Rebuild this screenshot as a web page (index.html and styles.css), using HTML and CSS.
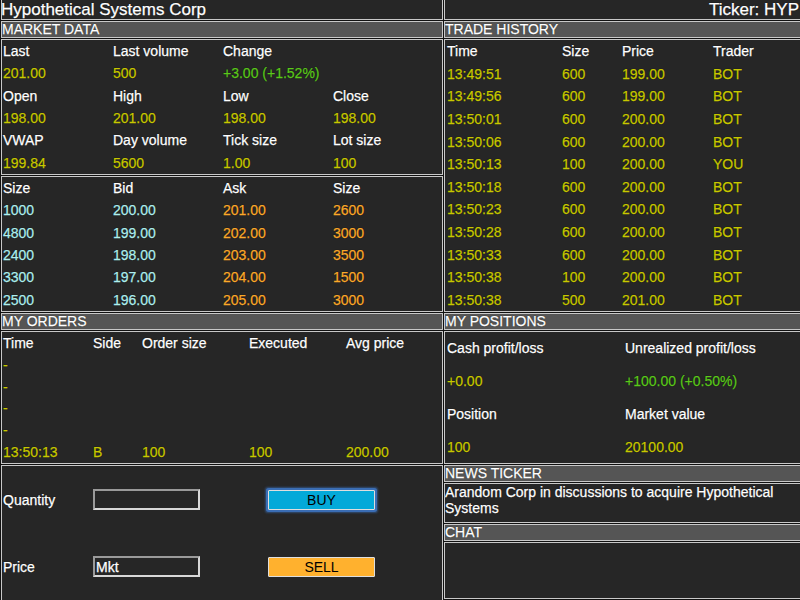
FILE: index.html
```html
<!DOCTYPE html>
<html>
<head>
<meta charset="utf-8">
<title>Hypothetical Systems Corp</title>
<link rel="stylesheet" href="styles.css">
</head>
<body>
<div class="app">
  <div class="col col-left">
    <div class="box title">Hypothetical Systems Corp</div>
    <div class="box head">MARKET DATA</div>
    <div class="box grid market">
      <span>Last</span><span>Last volume</span><span>Change</span><span></span>
      <span class="y">201.00</span><span class="y">500</span><span class="g">+3.00 (+1.52%)</span><span></span>
      <span>Open</span><span>High</span><span>Low</span><span>Close</span>
      <span class="y">198.00</span><span class="y">201.00</span><span class="y">198.00</span><span class="y">198.00</span>
      <span>VWAP</span><span>Day volume</span><span>Tick size</span><span>Lot size</span>
      <span class="y">199.84</span><span class="y">5600</span><span class="y">1.00</span><span class="y">100</span>
    </div>
    <div class="box grid book">
      <span>Size</span><span>Bid</span><span>Ask</span><span>Size</span>
      <span class="c">1000</span><span class="c">200.00</span><span class="o">201.00</span><span class="o">2600</span>
      <span class="c">4800</span><span class="c">199.00</span><span class="o">202.00</span><span class="o">3000</span>
      <span class="c">2400</span><span class="c">198.00</span><span class="o">203.00</span><span class="o">3500</span>
      <span class="c">3300</span><span class="c">197.00</span><span class="o">204.00</span><span class="o">1500</span>
      <span class="c">2500</span><span class="c">196.00</span><span class="o">205.00</span><span class="o">3000</span>
    </div>
    <div class="box head">MY ORDERS</div>
    <div class="box grid orders">
      <span>Time</span><span>Side</span><span>Order size</span><span>Executed</span><span>Avg price</span>
      <span class="y">-</span><span></span><span></span><span></span><span></span>
      <span class="y">-</span><span></span><span></span><span></span><span></span>
      <span class="y">-</span><span></span><span></span><span></span><span></span>
      <span class="y">-</span><span></span><span></span><span></span><span></span>
      <span class="y">13:50:13</span><span class="y">B</span><span class="y">100</span><span class="y">100</span><span class="y">200.00</span>
    </div>
    <div class="box entry">
      <span>Quantity</span>
      <input class="field" type="text" value="">
      <span></span>
      <button class="btn buy" type="button">BUY</button>
      <span>Price</span>
      <input class="field" type="text" value="Mkt">
      <span></span>
      <button class="btn sell" type="button">SELL</button>
    </div>
  </div>
  <div class="col col-right">
    <div class="box title ticker">Ticker: HYP</div>
    <div class="box head">TRADE HISTORY</div>
    <div class="box grid trades">
      <span>Time</span><span>Size</span><span>Price</span><span>Trader</span>
      <span class="y">13:49:51</span><span class="y">600</span><span class="y">199.00</span><span class="y">BOT</span>
      <span class="y">13:49:56</span><span class="y">600</span><span class="y">199.00</span><span class="y">BOT</span>
      <span class="y">13:50:01</span><span class="y">600</span><span class="y">200.00</span><span class="y">BOT</span>
      <span class="y">13:50:06</span><span class="y">600</span><span class="y">200.00</span><span class="y">BOT</span>
      <span class="y">13:50:13</span><span class="y">100</span><span class="y">200.00</span><span class="y">YOU</span>
      <span class="y">13:50:18</span><span class="y">600</span><span class="y">200.00</span><span class="y">BOT</span>
      <span class="y">13:50:23</span><span class="y">600</span><span class="y">200.00</span><span class="y">BOT</span>
      <span class="y">13:50:28</span><span class="y">600</span><span class="y">200.00</span><span class="y">BOT</span>
      <span class="y">13:50:33</span><span class="y">600</span><span class="y">200.00</span><span class="y">BOT</span>
      <span class="y">13:50:38</span><span class="y">100</span><span class="y">200.00</span><span class="y">BOT</span>
      <span class="y">13:50:38</span><span class="y">500</span><span class="y">201.00</span><span class="y">BOT</span>
    </div>
    <div class="box head">MY POSITIONS</div>
    <div class="box grid positions">
      <span>Cash profit/loss</span><span>Unrealized profit/loss</span>
      <span class="y">+0.00</span><span class="g">+100.00 (+0.50%)</span>
      <span>Position</span><span>Market value</span>
      <span class="y">100</span><span class="y">20100.00</span>
    </div>
    <div class="box head">NEWS TICKER</div>
    <div class="box news">Arandom Corp in discussions to acquire Hypothetical Systems</div>
    <div class="box head">CHAT</div>
    <div class="box chat"></div>
  </div>
</div>
</body>
</html>
```
FILE: styles.css
```css
html, body {
  margin: 0;
  padding: 0;
  background: #111111;
  overflow: hidden;
}

body {
  font-family: "Liberation Sans", Arial, Helvetica, sans-serif;
  font-size: 14px;
  color: #ffffff;
  -webkit-text-stroke: 0.25px currentColor;
  text-shadow: 0 0 1px rgba(0, 0, 0, 0.9);
}

.app {
  display: flex;
  gap: 1px;
  width: 801px;
  height: 600px;
  overflow: hidden;
}

.col {
  display: flex;
  flex-direction: column;
  gap: 1px;
  flex: none;
}

.col-left {
  width: 442px;
  margin-left: 1px;
}

.col-right {
  width: 357px;
}

.box {
  box-sizing: border-box;
  flex: none;
  border: 1px solid #c8c8c8;
  background: #262626;
}

.title {
  height: 20px;
  border-top: 0;
  font-size: 17px;
  line-height: 19px;
  white-space: nowrap;
  overflow: hidden;
  text-indent: -1px;
}

.ticker {
  text-align: right;
  padding-right: 1px;
}

.head {
  height: 17px;
  background: #555555;
  font-size: 14px;
  line-height: 15px;
  white-space: nowrap;
}

.grid {
  display: grid;
  align-items: center;
  padding-left: 1px;
  white-space: nowrap;
}

.market {
  height: 136px;
  grid-template-columns: repeat(4, 110px);
  grid-template-rows: repeat(6, 1fr);
}

.book {
  height: 136px;
  grid-template-columns: repeat(4, 110px);
  grid-template-rows: repeat(6, 1fr);
}

.orders {
  height: 133px;
  grid-template-columns: 90px 49px 107px 97px 1fr;
  grid-template-rows: repeat(6, 1fr);
}

.trades {
  height: 273px;
  padding-left: 2px;
  grid-template-columns: 115px 60px 91px 1fr;
  grid-template-rows: repeat(12, 1fr);
}

.positions {
  height: 133px;
  padding-left: 2px;
  grid-template-columns: 178px 1fr;
  grid-template-rows: repeat(4, 1fr);
}

.news {
  height: 40px;
  line-height: 16px;
}

.chat {
  height: 57px;
}

.entry {
  height: 140px;
  display: grid;
  grid-template-columns: 90px 107px 68px 107px;
  grid-template-rows: 21px 21px;
  row-gap: 46px;
  align-items: center;
  padding: 23px 0 0 1px;
}

.field {
  box-sizing: border-box;
  width: 107px;
  height: 21px;
  margin: 0;
  padding: 0 1px;
  background: #262626;
  color: #ffffff;
  font-family: "Liberation Sans", Arial, sans-serif;
  font-size: 14px;
  -webkit-text-stroke: 0.25px currentColor;
  border-style: solid;
  border-width: 2px;
  border-color: #9a9a9a #d8d8d8 #d8d8d8 #9a9a9a;
  outline: none;
}

.btn {
  box-sizing: border-box;
  width: 107px;
  height: 20px;
  margin: 0;
  padding: 0;
  border: 1px solid #dedede;
  border-radius: 1px;
  color: #000000;
  font-family: "Liberation Sans", Arial, sans-serif;
  font-size: 14px;
  line-height: 18px;
  text-align: center;
  text-shadow: none;
  -webkit-text-stroke: 0;
}

.buy {
  background: #03a9d9;
  box-shadow: 0 0 0 2px #3a6db4, 0 0 2px 3px rgba(58, 109, 180, 0.55);
}

.sell {
  background: #ffb12e;
}

.y { color: #c8c800; }
.g { color: #5cc81c; }
.c { color: #aeeeee; }
.o { color: #fba92a; }
```
